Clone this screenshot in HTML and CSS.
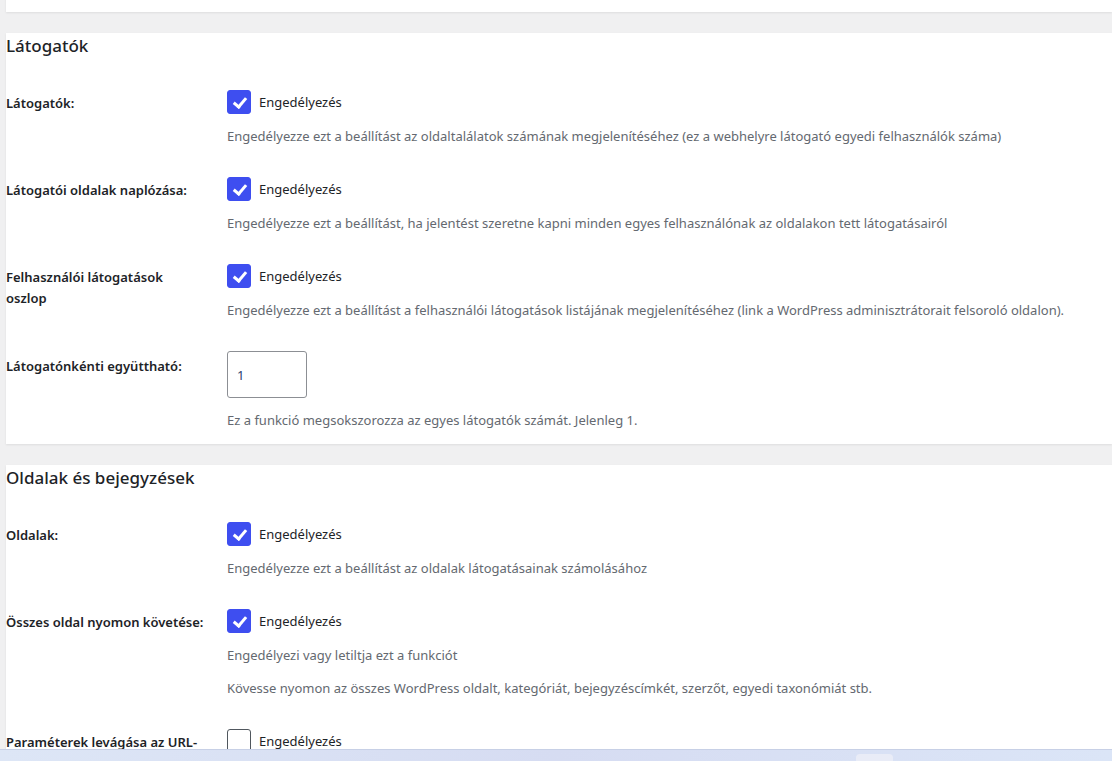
FILE: index.html
```html
<!DOCTYPE html>
<html lang="hu">
<head>
    <meta charset="UTF-8">
    <meta name="viewport" content="width=device-width, initial-scale=1.0">
    <title>Beállítások</title>
    <link rel="stylesheet" href="styles.css">
</head>
<body>
    <div class="page">
        <div class="card card-top"></div>

        <!-- Látogatók -->
        <div class="card">
            <h2>Látogatók</h2>
            <div class="rows">
                <div class="row">
                    <div class="label">Látogatók:</div>
                    <div class="field">
                        <label class="check"><span class="box checked"></span>Engedélyezés</label>
                        <p class="desc">Engedélyezze ezt a beállítást az oldaltalálatok számának megjelenítéséhez (ez a webhelyre látogató egyedi felhasználók száma)</p>
                    </div>
                </div>
                <div class="row">
                    <div class="label">Látogatói oldalak naplózása:</div>
                    <div class="field">
                        <label class="check"><span class="box checked"></span>Engedélyezés</label>
                        <p class="desc">Engedélyezze ezt a beállítást, ha jelentést szeretne kapni minden egyes felhasználónak az oldalakon tett látogatásairól</p>
                    </div>
                </div>
                <div class="row">
                    <div class="label">Felhasználói látogatások<br>oszlop</div>
                    <div class="field">
                        <label class="check"><span class="box checked"></span>Engedélyezés</label>
                        <p class="desc">Engedélyezze ezt a beállítást a felhasználói látogatások listájának megjelenítéséhez (link a WordPress adminisztrátorait felsoroló oldalon).</p>
                    </div>
                </div>
                <div class="row">
                    <div class="label label-input">Látogatónkénti együttható:</div>
                    <div class="field">
                        <input class="num" type="text" value="1">
                        <p class="desc">Ez a funkció megsokszorozza az egyes látogatók számát. Jelenleg 1.</p>
                    </div>
                </div>
            </div>
        </div>

        <!-- Oldalak és bejegyzések -->
        <div class="card">
            <h2>Oldalak és bejegyzések</h2>
            <div class="rows">
                <div class="row">
                    <div class="label">Oldalak:</div>
                    <div class="field">
                        <label class="check"><span class="box checked"></span>Engedélyezés</label>
                        <p class="desc">Engedélyezze ezt a beállítást az oldalak látogatásainak számolásához</p>
                    </div>
                </div>
                <div class="row">
                    <div class="label">Összes oldal nyomon követése:</div>
                    <div class="field">
                        <label class="check"><span class="box checked"></span>Engedélyezés</label>
                        <p class="desc">Engedélyezi vagy letiltja ezt a funkciót</p>
                        <p class="desc desc-more">Kövesse nyomon az összes WordPress oldalt, kategóriát, bejegyzéscímkét, szerzőt, egyedi taxonómiát stb.</p>
                    </div>
                </div>
                <div class="row">
                    <div class="label">Paraméterek levágása az URL-ből:</div>
                    <div class="field">
                        <label class="check"><span class="box"></span>Engedélyezés</label>
                    </div>
                </div>
            </div>
        </div>
    </div>

    <div class="taskbar">
        <span class="task"></span>
    </div>
</body>
</html>
```

FILE: styles.css
```css
body {
    margin: 0;
    background-color: #f0f0f1;
    font-family: "Noto Sans", "Open Sans", sans-serif;
    font-size: 13px;
    color: #1d2327;
    height: 761px;
    overflow: hidden;
}

.page {
    display: flex;
    flex-direction: column;
    gap: 21px;
    padding-left: 6px;
    margin-top: -21px;
}

.card {
    background-color: #fff;
    box-shadow: 0 1px 2px rgba(0, 0, 0, 0.08);
}
.card-top {
    height: 33px;
}

h2 {
    margin: 0;
    font-size: 17px;
    font-weight: 500;
    line-height: 26px;
    color: #1d2327;
}

.rows {
    display: flex;
    flex-direction: column;
    gap: 31px;
    padding: 31px 0 14px;
}
.row {
    display: grid;
    grid-template-columns: 221px 1fr;
}
.label {
    width: 205px;
    font-weight: 600;
    line-height: 21px;
    padding-top: 3px;
}
.label-input {
    padding-top: 5px;
}

.check {
    display: flex;
    align-items: center;
    gap: 8px;
    height: 24px;
    font-size: 13px;
}
.box {
    box-sizing: border-box;
    width: 24px;
    height: 24px;
    border: 1px solid #50575e;
    border-radius: 3px;
    background: #fff;
    position: relative;
}
.box.checked {
    border-color: #3e4ef0;
    background-color: #3e4ef0;
}
.box.checked::after {
    content: "";
    position: absolute;
    left: 8px;
    top: 4px;
    width: 5px;
    height: 10px;
    border: solid #fff;
    border-width: 0 3px 3px 0;
    transform: rotate(40deg);
}

.num {
    display: block;
    box-sizing: border-box;
    width: 80px;
    height: 47px;
    border: 1px solid #8c8f94;
    border-radius: 3px;
    padding: 0 9px;
    font-family: inherit;
    font-size: 13px;
    color: #2c3e6e;
}

.desc {
    margin: 12px 0 0;
    line-height: 20px;
    color: #646970;
}
.desc-more {
    margin-top: 13px;
}

.taskbar {
    position: fixed;
    left: 0;
    right: 0;
    bottom: 0;
    height: 11px;
    background: linear-gradient(90deg, #dde6f6, #d6dcf2 50%, #dbe5f7);
    border-top: 1px solid #c7d0e6;
}
.task {
    position: absolute;
    left: 856px;
    top: 4px;
    width: 37px;
    height: 10px;
    border-radius: 4px;
    background: #e9ecf7;
}
```
